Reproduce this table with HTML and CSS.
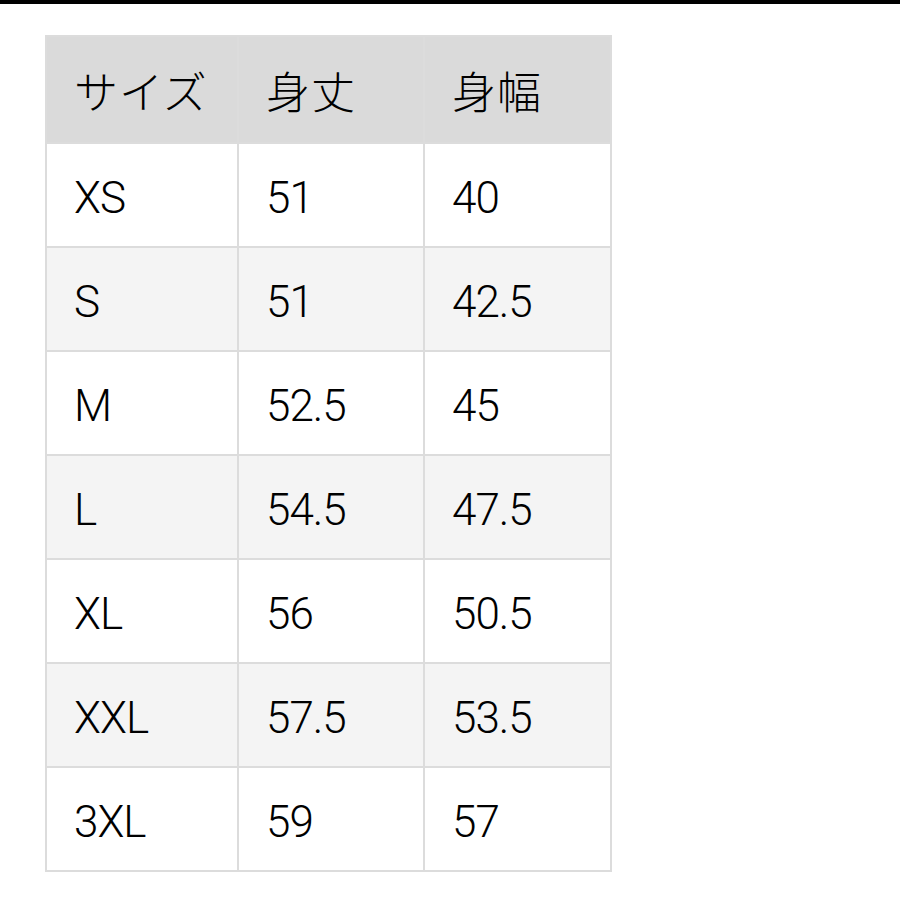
FILE: index.html
```html
<!DOCTYPE html>
<html lang="ja">
<head>
<meta charset="utf-8">
<link rel="stylesheet" href="styles.css">
</head>
<body>
<div class="topbar"></div>
<div class="wrap">
<table class="size">
<thead>
<tr><th>サイズ</th><th>身丈</th><th>身幅</th></tr>
</thead>
<tbody>
<tr><td>XS</td><td>51</td><td>40</td></tr>
<tr><td>S</td><td>51</td><td>42.5</td></tr>
<tr><td>M</td><td>52.5</td><td>45</td></tr>
<tr><td>L</td><td>54.5</td><td>47.5</td></tr>
<tr><td>XL</td><td>56</td><td>50.5</td></tr>
<tr><td>XXL</td><td>57.5</td><td>53.5</td></tr>
<tr><td>3XL</td><td>59</td><td>57</td></tr>
</tbody>
</table>
</div>
</body>
</html>
```
FILE: styles.css
```css
html, body {
  margin: 0;
  padding: 0;
  background: #fff;
}
body {
  width: 900px;
  height: 900px;
  overflow: hidden;
  font-family: Roboto, "Noto Sans CJK JP", "Noto Sans", sans-serif;
  color: #000;
}
.topbar {
  height: 4px;
  background: #000;
}
.wrap {
  padding: 31px 0 0 45px;
}
.size {
  border-collapse: collapse;
  border: 2px solid #dcdcdc;
}
.size th, .size td {
  border: 2px solid #dcdcdc;
  height: 104px;
  padding: 6px 0 0 27px;
  text-align: left;
  font-size: 44px;
  font-weight: 300;
  letter-spacing: -1px;
  line-height: 1;
  box-sizing: border-box;
}
.size th {
  background: #dadada;
  height: 107px;
  padding-top: 8px;
  font-weight: 300;
  letter-spacing: 1px;
}
.size th:nth-child(1), .size td:nth-child(1) { width: 192px; }
.size th:nth-child(2), .size td:nth-child(2) { width: 186px; }
.size th:nth-child(3), .size td:nth-child(3) { width: 187px; }
.size tbody tr:nth-child(even) td {
  background: #f4f4f4;
}
```
